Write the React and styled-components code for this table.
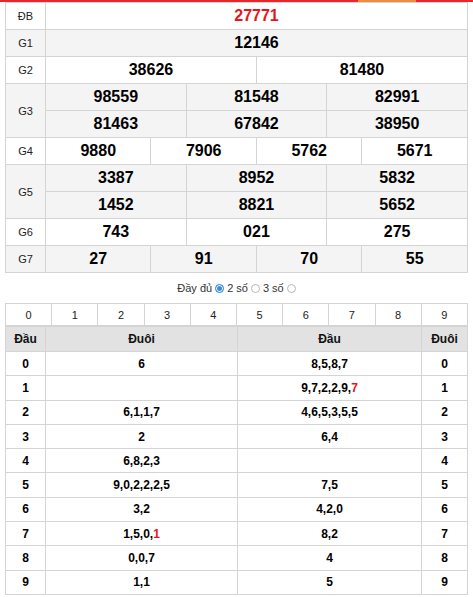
import styled, { createGlobalStyle } from 'styled-components';

const GlobalStyle = createGlobalStyle`
  html, body {
    margin: 0;
    padding: 0;
    background: #fff;
    font-family: "Liberation Sans", Arial, sans-serif;
  }
`;

const TopBar = styled.div`
  height: 2px;
  display: flex;
`;

const BarPiece = styled.div`
  width: ${(props) => props.$w}px;
  flex-grow: ${(props) => (props.$grow ? 1 : 0)};
  background: ${(props) => props.$color};
`;

const Wrap = styled.div`
  width: 463px;
  margin-left: 5px;
`;

const Table = styled.table`
  width: 100%;
  border-collapse: collapse;
  table-layout: fixed;
  border: 1px solid #d4d4d4;
`;

const Tr = styled.tr`
  background: ${(props) => (props.$alt ? '#f4f4f4' : '#fff')};
`;

const Label = styled.td`
  border: 1px solid #d4d4d4;
  height: 26px;
  padding: 0;
  text-align: center;
  font-size: 11px;
  color: #222;
`;

const Num = styled.td`
  border: 1px solid #d4d4d4;
  height: 26px;
  padding: 0;
  text-align: center;
  font-size: 16px;
  font-weight: bold;
  color: ${(props) => (props.$red ? '#e8151d' : '#000')};
`;

const Switcher = styled.div`
  height: 30px;
  display: flex;
  align-items: center;
  justify-content: center;
  gap: 3px;
  font-size: 11px;
  color: #333;
`;

const Radio = styled.span`
  width: 7px;
  height: 7px;
  border-radius: 50%;
  border: 1px solid ${(props) => (props.$on ? '#3b8de0' : '#b8b8b8')};
  background: ${(props) => (props.$on ? '#3b8de0' : '#fff')};
  box-shadow: ${(props) => (props.$on ? 'inset 0 0 0 1px #fff' : 'none')};
  display: inline-block;
`;

const DigitCell = styled.td`
  border: 1px solid #d4d4d4;
  height: 21px;
  padding: 0;
  text-align: center;
  font-size: 11px;
  color: #222;
`;

const HeadCell = styled.th`
  border: 1px solid #d4d4d4;
  height: 24px;
  padding: 0;
  background: #e2e2e2;
  font-size: 12px;
  font-weight: bold;
  color: #111;
`;

const LotoCell = styled.td`
  border: 1px solid #d4d4d4;
  height: 23.3px;
  padding: 0;
  text-align: center;
  font-size: 12px;
  font-weight: bold;
  color: #000;
`;

const Red = styled.span`
  color: #e8151d;
`;

const Banner = styled.div`
  display: flex;
  margin-top: 2px;
  height: 6px;
`;

const BannerPart = styled.div`
  width: ${(props) => props.$w}px;
  margin-left: ${(props) => props.$ml}px;
  background: ${(props) => props.$bg};
`;

const prizes = [
  { name: 'ĐB', rows: [['27771']], red: true },
  { name: 'G1', rows: [['12146']] },
  { name: 'G2', rows: [['38626', '81480']] },
  { name: 'G3', rows: [['98559', '81548', '82991'], ['81463', '67842', '38950']] },
  { name: 'G4', rows: [['9880', '7906', '5762', '5671']] },
  { name: 'G5', rows: [['3387', '8952', '5832'], ['1452', '8821', '5652']] },
  { name: 'G6', rows: [['743', '021', '275']] },
  { name: 'G7', rows: [['27', '91', '70', '55']] },
];

const loto = [
  ['6', '8,5,8,7'],
  ['', <>9,7,2,2,9,<Red>7</Red></>],
  ['6,1,1,7', '4,6,5,3,5,5'],
  ['2', '6,4'],
  ['6,8,2,3', ''],
  ['9,0,2,2,2,5', '7,5'],
  ['3,2', '4,2,0'],
  [<>1,5,0,<Red>1</Red></>, '8,2'],
  ['0,0,7', '4'],
  ['1,1', '5'],
];

export default function App() {
  return (
    <>
      <GlobalStyle />
      <TopBar>
        <BarPiece $w={358} $color="#e8262b" />
        <BarPiece $w={58} $color="#f08a3c" />
        <BarPiece $grow $color="#e8262b" />
      </TopBar>
      <Wrap>
        <Table>
          <colgroup>
            <col style={{ width: 40 }} />
            {Array.from({ length: 12 }).map((_, i) => (
              <col key={i} />
            ))}
          </colgroup>
          <tbody>
            {prizes.map((p, pi) =>
              p.rows.map((row, ri) => (
                <Tr key={p.name + ri} $alt={pi % 2 === 1}>
                  {ri === 0 && <Label rowSpan={p.rows.length}>{p.name}</Label>}
                  {row.map((n, ni) => (
                    <Num key={ni} colSpan={12 / row.length} $red={p.red}>
                      {n}
                    </Num>
                  ))}
                </Tr>
              ))
            )}
          </tbody>
        </Table>

        <Switcher>
          Đầy đủ <Radio $on /> 2 số <Radio /> 3 số <Radio />
        </Switcher>

        <Table>
          <tbody>
            <tr>
              {Array.from({ length: 10 }).map((_, i) => (
                <DigitCell key={i}>{i}</DigitCell>
              ))}
            </tr>
          </tbody>
        </Table>
        <Table>
          <colgroup>
            <col style={{ width: 40 }} />
            <col style={{ width: 192 }} />
            <col style={{ width: 184 }} />
            <col style={{ width: 46 }} />
          </colgroup>
          <thead>
            <tr>
              <HeadCell>Đầu</HeadCell>
              <HeadCell>Đuôi</HeadCell>
              <HeadCell>Đầu</HeadCell>
              <HeadCell>Đuôi</HeadCell>
            </tr>
          </thead>
          <tbody>
            {loto.map((r, i) => (
              <tr key={i}>
                <LotoCell>{i}</LotoCell>
                <LotoCell>{r[0]}</LotoCell>
                <LotoCell>{r[1]}</LotoCell>
                <LotoCell>{i}</LotoCell>
              </tr>
            ))}
          </tbody>
        </Table>
      </Wrap>
      <Banner>
        <BannerPart $ml={95} $w={234} $bg="#3a2a8c" />
        <BannerPart $ml={3} $w={135} $bg="#333" />
      </Banner>
    </>
  );
}
